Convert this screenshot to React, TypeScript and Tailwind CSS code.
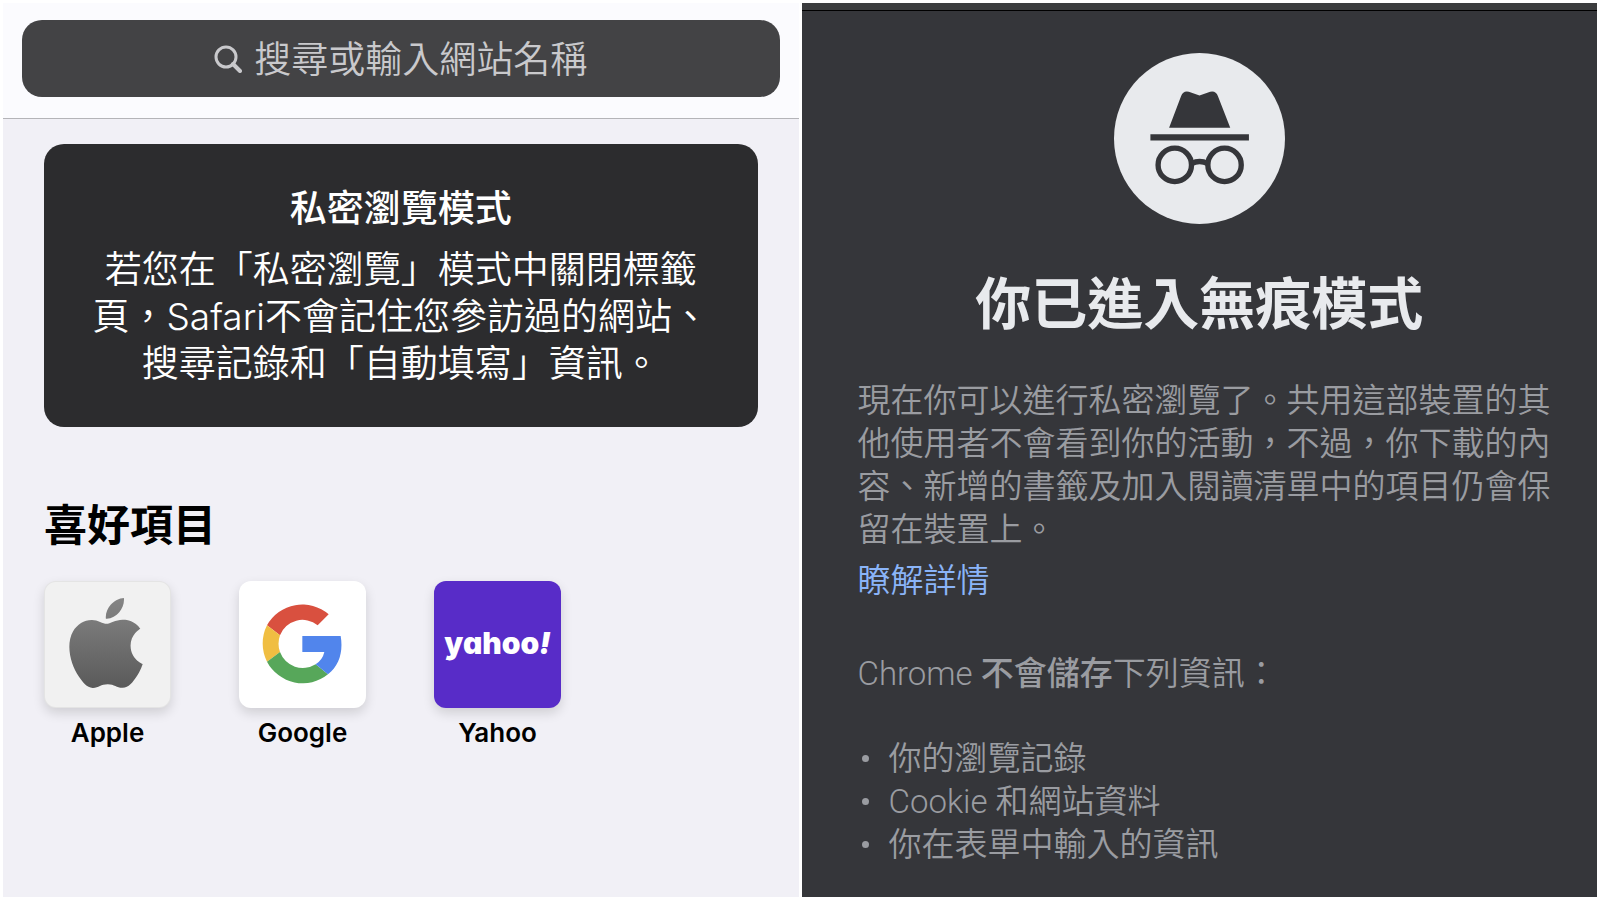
import type { ReactNode } from "react";

const savedInfo = ["你的瀏覽記錄", "Cookie 和網站資料", "你在表單中輸入的資訊"];

const favorites: { name: string; tile: string; logo: ReactNode }[] = [
  { name: "Apple", tile: "border border-black/5 bg-[#f1f1f1]", logo: <AppleLogo /> },
  { name: "Google", tile: "bg-white", logo: <GoogleLogo /> },
  { name: "Yahoo", tile: "bg-[#582cc8]", logo: <YahooLogo /> },
];

function AppleLogo() {
  return (
    <svg viewBox="0 0 24 24" className="mr-1 mb-1 size-[90px]" aria-hidden="true">
      <defs>
        <linearGradient id="apple-fill" x1="0" y1="0" x2="0" y2="1">
          <stop offset="0" stopColor="#858585" />
          <stop offset="1" stopColor="#5a5a5a" />
        </linearGradient>
      </defs>
      <path
        fill="url(#apple-fill)"
        d="M12.152 6.896c-.948 0-2.415-1.078-3.96-1.04-2.04.027-3.91 1.183-4.961 3.014-2.117 3.675-.546 9.103 1.519 12.09 1.013 1.454 2.208 3.09 3.792 3.039 1.52-.065 2.09-.987 3.935-.987 1.831 0 2.35.987 3.96.948 1.637-.026 2.676-1.48 3.676-2.948 1.156-1.688 1.636-3.325 1.662-3.415-.039-.013-3.182-1.221-3.22-4.857-.026-3.04 2.48-4.494 2.597-4.559-1.429-2.09-3.623-2.324-4.39-2.376-2-.156-3.675 1.09-4.61 1.09zM15.53 3.83c.843-1.012 1.4-2.427 1.245-3.83-1.207.052-2.662.805-3.532 1.818-.78.896-1.454 2.338-1.273 3.714 1.338.104 2.715-.688 3.559-1.701"
      />
    </svg>
  );
}

function GoogleLogo() {
  return (
    <svg viewBox="0 0 240 246" className="mr-0.5 mb-0.5 h-[82px] w-20" aria-hidden="true">
      <path fill="#d9503f" d="M15 67A121 121 0 0 1 200 34L167 67A72 72 0 0 0 54 97Z" />
      <path fill="#f0be42" d="M15 67A121 121 0 0 0 15 176L54 147A74 74 0 0 1 54 97Z" />
      <path fill="#57a75a" d="M15 176A121 121 0 0 0 198 214L161 184A73 73 0 0 1 54 147Z" />
      <path fill="#5185ec" d="M121 99H236C244 146 232 188 198 214L161 184Q182 170 187 147H121Z" />
    </svg>
  );
}

function YahooLogo() {
  return (
    <span className="pb-1 text-[30px] leading-10 font-black text-white [font-feature-settings:'cv11']">
      yahoo<i>!</i>
    </span>
  );
}

function IncognitoIcon() {
  return (
    <svg viewBox="102 68 512 512" className="size-[171px]" aria-hidden="true">
      <circle cx="358" cy="324" r="256" fill="#e8eaed" />
      <g fill="#35363a">
        <path d="M267 292L303 197Q309 180 326 184L358 195L390 184Q407 180 413 197L450 292Z" />
        <path d="M211 311H506V330H211Z" />
      </g>
      <g fill="none" stroke="#35363a" strokeWidth="16">
        <circle cx="284" cy="403" r="50" />
        <circle cx="433" cy="403" r="50" />
        <path d="M334 399Q358 387 383 399" />
      </g>
    </svg>
  );
}

function SafariPanel() {
  return (
    <section className="flex-1 bg-[#f1f0f6]">
      <header className="border-b border-[#b4b4b8] bg-[#fbfbfe] px-[19px] pt-[17px] pb-[21px]">
        <label className="flex h-[77px] items-center justify-center gap-3 rounded-[20px] bg-[#434345] text-[#c9c9cc]">
          <svg viewBox="0 0 28 28" className="size-7" fill="none" stroke="currentColor" aria-hidden="true">
            <circle cx="12" cy="12" r="10" strokeWidth="3" />
            <path d="M19 19L26 26" strokeWidth="4" strokeLinecap="round" />
          </svg>
          <input
            type="text"
            aria-label="搜尋或輸入網站名稱"
            placeholder="搜尋或輸入網站名稱"
            className="field-sizing-content bg-transparent pb-1 text-[37px] leading-[47px] font-[350] outline-none placeholder:text-[#c9c9cc]"
          />
        </label>
      </header>

      <main className="px-[41px] pt-[25px]">
        <div className="rounded-[20px] bg-[#2c2c2e] px-11 pt-[41px] pb-10 text-center text-[37px] leading-[47px] text-white">
          <h2 className="mb-[14px] font-medium">私密瀏覽模式</h2>
          <p className="font-[350]">
            若您在「私密瀏覽」模式中關閉標籤頁，Safari不會記住您參訪過的網站、搜尋記錄和「自動填寫」資訊。
          </p>
        </div>

        <h2 className="mt-[70px] text-[43px] leading-[56px] font-bold text-black">喜好項目</h2>
        <ul className="mt-[28px] flex gap-[68px]">
          {favorites.map((site) => (
            <li key={site.name}>
              <a href="#" className="flex w-[127px] flex-col items-center gap-[9px]">
                <span className={`flex size-[127px] items-center justify-center rounded-xl shadow-[0_5px_12px_rgba(0,0,0,0.14)] ${site.tile}`}>
                  {site.logo}
                </span>
                <span className="text-[26px] leading-8 font-semibold text-black">{site.name}</span>
              </a>
            </li>
          ))}
        </ul>
      </main>
    </section>
  );
}

function ChromePanel() {
  return (
    <section className="flex-1 bg-[#35363a] font-['Roboto','Noto_Sans_CJK_TC',sans-serif] text-[#9a9ca1]">
      <div className="h-2 border-b border-black bg-[#3b3c3e]" />
      <main className="pt-[42px] pr-10 pb-7 pl-14 text-[33px] leading-[43px] font-[350]">
        <div className="flex flex-col items-center pr-4">
          <IncognitoIcon />
          <h1 className="mt-[45px] text-[56px] leading-[72px] font-bold text-[#e8eaed]">你已進入無痕模式</h1>
        </div>
        <p className="mt-[38px]">
          現在你可以進行私密瀏覽了。共用這部裝置的其他使用者不會看到你的活動，不過，你下載的內容、新增的書籤及加入閱讀清單中的項目仍會保留在裝置上。
        </p>
        <a href="#" className="mt-2 block text-[#8ab4f8]">瞭解詳情</a>
        <p className="mt-[50px]">
          Chrome <b className="font-medium">不會儲存</b>下列資訊：
        </p>
        <ul className="mt-[42px]">
          {savedInfo.map((item) => (
            <li key={item} className="flex items-center gap-5">
              <span className="ml-1 size-[7px] rounded-full bg-current" />
              {item}
            </li>
          ))}
        </ul>
      </main>
    </section>
  );
}

export default function App() {
  return (
    <div lang="zh-Hant-TW" className="flex min-h-screen gap-[3px] bg-white p-[3px] font-['Inter','Noto_Sans_CJK_TC',sans-serif]">
      <SafariPanel />
      <ChromePanel />
    </div>
  );
}
